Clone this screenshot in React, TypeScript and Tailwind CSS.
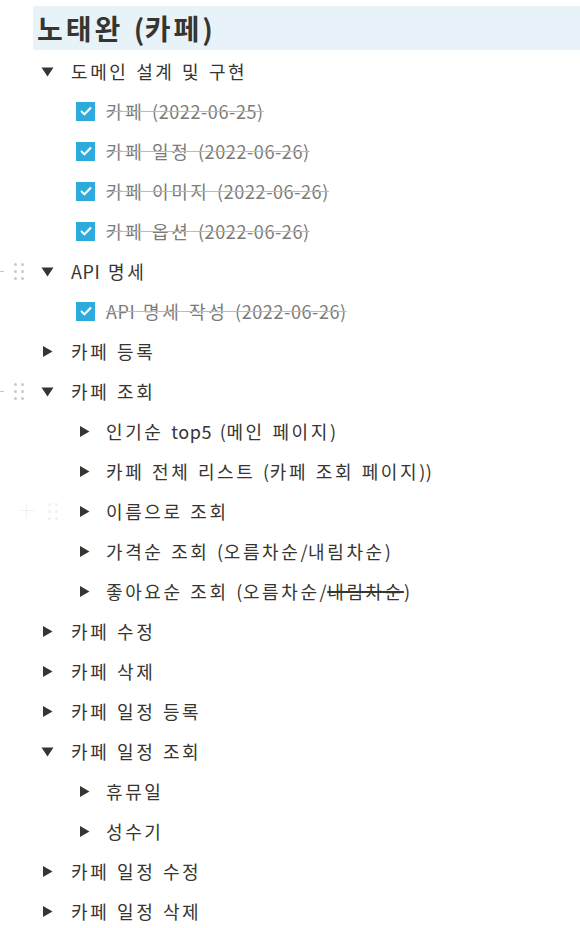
import React from "react"

type Item = {
  text: React.ReactNode
  kind: "open" | "closed" | "check"
  level: number
  handle?: "dark" | "faint"
}

// hangul runs and spaces get wider spacing than latin runs, to mimic the wide korean face
function T({ s, big }: { s: string; big?: boolean }) {
  const parts = s.split(/([가-힣]+| )/).filter((p) => p !== "")
  return (
    <>
      {parts.map((p, i) => {
        if (p === " ") {
          return (
            <span key={i} className={big ? "tracking-[4px]" : "tracking-[3.6px]"}>
              {" "}
            </span>
          )
        }
        if (/[가-힣]/.test(p)) {
          return (
            <span key={i} className={big ? "tracking-[3px]" : "tracking-[2.6px]"}>
              {p}
            </span>
          )
        }
        return (
          <span key={i} className={big ? "tracking-[0.5px]" : "tracking-[0.6px]"}>
            {p}
          </span>
        )
      })}
    </>
  )
}

const strikeDone = "line-through decoration-[#b9b9b9] text-[#7c7b78]"

const items: Item[] = [
  { text: <T s="도메인 설계 및 구현" />, kind: "open", level: 0 },
  { text: <T s="카페 (2022-06-25)" />, kind: "check", level: 1 },
  { text: <T s="카페 일정 (2022-06-26)" />, kind: "check", level: 1 },
  { text: <T s="카페 이미지 (2022-06-26)" />, kind: "check", level: 1 },
  { text: <T s="카페 옵션 (2022-06-26)" />, kind: "check", level: 1 },
  { text: <T s="API 명세" />, kind: "open", level: 0, handle: "dark" },
  { text: <T s="API 명세 작성 (2022-06-26)" />, kind: "check", level: 1 },
  { text: <T s="카페 등록" />, kind: "closed", level: 0 },
  { text: <T s="카페 조회" />, kind: "open", level: 0, handle: "dark" },
  { text: <T s="인기순 top5 (메인 페이지)" />, kind: "closed", level: 1 },
  { text: <T s="카페 전체 리스트 (카페 조회 페이지))" />, kind: "closed", level: 1 },
  { text: <T s="이름으로 조회" />, kind: "closed", level: 1, handle: "faint" },
  { text: <T s="가격순 조회 (오름차순/내림차순)" />, kind: "closed", level: 1 },
  {
    text: (
      <>
        <T s="좋아요순 조회 (오름차순/" />
        <span className="line-through decoration-[#37352f] decoration-2">
          <T s="내림차순" />
        </span>
        <T s=")" />
      </>
    ),
    kind: "closed",
    level: 1,
  },
  { text: <T s="카페 수정" />, kind: "closed", level: 0 },
  { text: <T s="카페 삭제" />, kind: "closed", level: 0 },
  { text: <T s="카페 일정 등록" />, kind: "closed", level: 0 },
  { text: <T s="카페 일정 조회" />, kind: "open", level: 0 },
  { text: <T s="휴뮤일" />, kind: "closed", level: 1 },
  { text: <T s="성수기" />, kind: "closed", level: 1 },
  { text: <T s="카페 일정 수정" />, kind: "closed", level: 0 },
  { text: <T s="카페 일정 삭제" />, kind: "closed", level: 0 },
]

function Triangle({ open }: { open: boolean }) {
  return (
    <svg width="13" height="13" viewBox="0 0 13 13" className="shrink-0">
      {open ? (
        <path d="M0.5 2.5 L12.5 2.5 L6.5 11.5 Z" fill="#37352f" />
      ) : (
        <path d="M2 1 L11.5 6.5 L2 12 Z" fill="#37352f" />
      )}
    </svg>
  )
}

function Check() {
  return (
    <div className="flex h-[19px] w-[19px] shrink-0 items-center justify-center bg-[#2eaadc]">
      <svg width="14" height="12" viewBox="0 0 14 12">
        <path d="M2 6 L5.5 9.3 L12 2.6" fill="none" stroke="white" strokeWidth="2.1" />
      </svg>
    </div>
  )
}

function Dots({ faint }: { faint?: boolean }) {
  const c = faint ? "bg-[#f1f1f0]" : "bg-[#c9c8c5]"
  return (
    <div className="grid grid-cols-2 gap-x-[4px] gap-y-[4px]">
      {[0, 1, 2, 3, 4, 5].map((i) => (
        <span key={i} className={`h-[3px] w-[3px] rounded-full ${c}`} />
      ))}
    </div>
  )
}

function Row({ item }: { item: Item }) {
  const pad = item.level === 0 ? "pl-[41px]" : item.kind === "check" ? "pl-[76px]" : "pl-[78px]"
  return (
    <div className={`relative flex h-10 items-center ${pad}`}>
      {item.handle === "dark" && (
        <div className="absolute left-0 top-0 flex h-10 items-center">
          <span className="mr-[10px] h-px w-[4px] bg-[#c9c8c5]" />
          <Dots />
        </div>
      )}
      {item.handle === "faint" && (
        <div className="absolute left-[20px] top-0 flex h-10 items-center">
          <span className="relative mr-[14px] block h-[14px] w-[14px]">
            <span className="absolute left-0 top-[6px] h-px w-[14px] bg-[#f1f1f0]" />
            <span className="absolute left-[6px] top-0 h-[14px] w-px bg-[#f1f1f0]" />
          </span>
          <Dots faint />
        </div>
      )}
      {item.kind === "check" ? (
        <>
          <Check />
          <span className={`ml-[11px] ${strikeDone}`}>{item.text}</span>
        </>
      ) : (
        <>
          <Triangle open={item.kind === "open"} />
          <span className={item.level === 0 ? "ml-[17px]" : "ml-[15px]"}>{item.text}</span>
        </>
      )}
    </div>
  )
}

export default function App() {
  return (
    <div
      className="h-[928px] w-[580px] overflow-hidden bg-white pt-[6px] text-[18px] text-[#37352f]"
      style={{ fontFamily: '"Noto Sans CJK KR", "Noto Sans", sans-serif' }}
    >
      <div className="ml-[33px] flex h-[44px] items-center bg-[#e7f3f8] pl-[4px]">
        <h1 className="text-[28px] font-bold leading-none text-[#37352f]">
          <T s="노태완 (카페)" big />
        </h1>
      </div>
      <div className="pt-[1px]">
        {items.map((it, i) => (
          <Row key={i} item={it} />
        ))}
      </div>
    </div>
  )
}
